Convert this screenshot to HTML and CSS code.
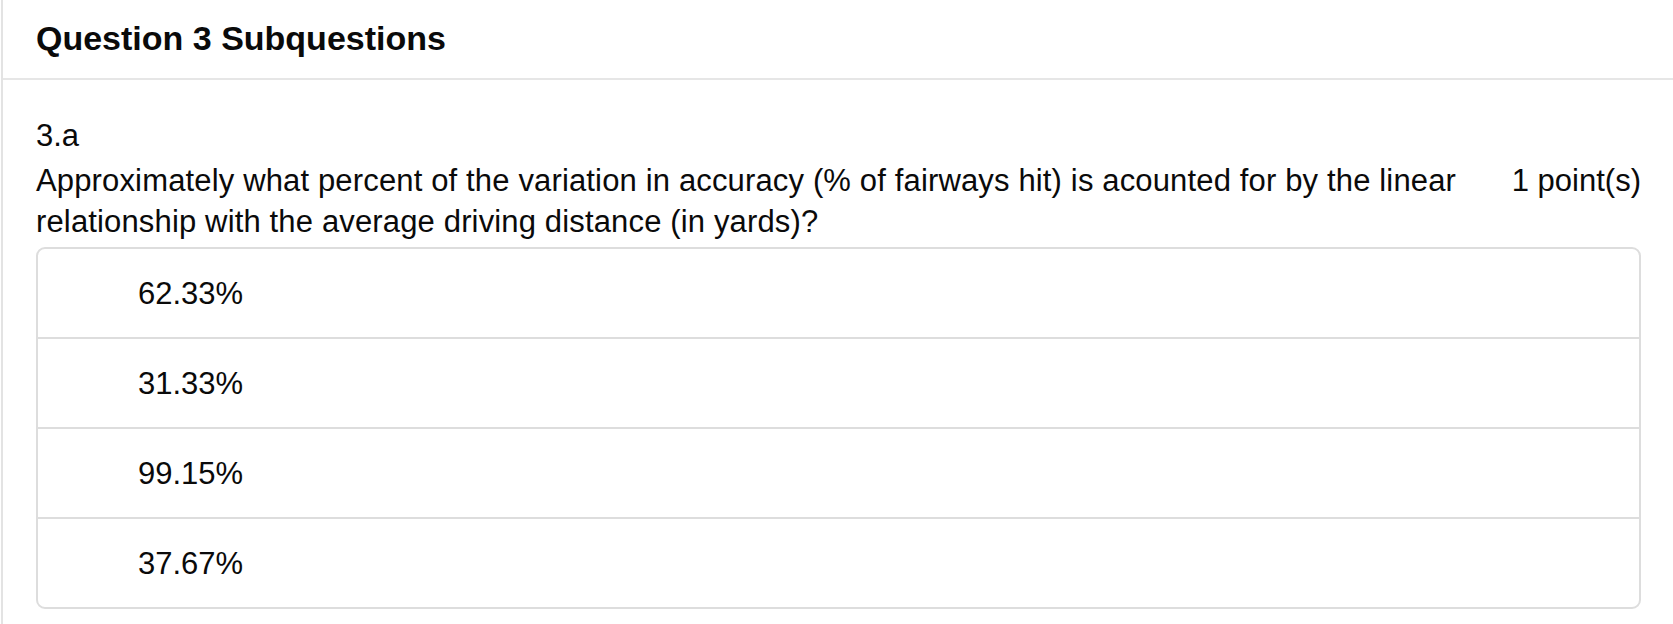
FILE: index.html
```html
<!DOCTYPE html>
<html lang="en">
<head>
<meta charset="utf-8">
<title>Question 3 Subquestions</title>
<link rel="stylesheet" href="styles.css">
</head>
<body>
<section class="panel">
  <header class="panel-header">
    <h2 class="panel-title">Question 3 Subquestions</h2>
  </header>
  <div class="panel-body">
    <div class="sub-label">3.a</div>
    <div class="question-row">
      <div class="question-text">Approximately what percent of the variation in accuracy (% of fairways hit) is acounted for by the linear relationship with the average driving distance (in yards)?</div>
      <div class="question-points">1 point(s)</div>
    </div>
    <ul class="options">
      <li class="option">62.33%</li>
      <li class="option">31.33%</li>
      <li class="option">99.15%</li>
      <li class="option">37.67%</li>
    </ul>
  </div>
</section>
</body>
</html>
```

FILE: styles.css
```css
html, body {
  margin: 0;
  padding: 0;
  background: #ffffff;
}

body {
  font-family: "Liberation Sans", Arial, Helvetica, sans-serif;
  color: #0a0a0a;
  overflow: hidden;
}

.panel {
  margin-left: 1px;
  border-left: 2px solid #e3e3e3;
  min-height: 624px;
  box-sizing: border-box;
}

.panel-header {
  padding: 18px 32px 20px 33px;
  border-bottom: 2px solid #e6e6e6;
}

.panel-title {
  margin: 0;
  font-size: 34px;
  line-height: 40px;
  font-weight: bold;
}

.panel-body {
  padding: 35px 32px 0 33px;
  font-size: 31px;
  line-height: 41px;
}

.sub-label {
  margin-bottom: 4px;
}

.question-row {
  display: flex;
  align-items: flex-start;
  justify-content: space-between;
}

.question-text {
  flex: 1;
  max-width: 1460px;
  letter-spacing: 0.15px;
}

.question-points {
  flex: none;
  margin-left: 40px;
  white-space: nowrap;
}

.options {
  list-style: none;
  margin: 5px 0 0 0;
  padding: 0;
  border: 2px solid #dddddd;
  border-radius: 9px;
}

.option {
  height: 88px;
  display: flex;
  align-items: center;
  padding-left: 100px;
  border-bottom: 2px solid #dddddd;
}

.option:last-child {
  border-bottom: none;
}
```
